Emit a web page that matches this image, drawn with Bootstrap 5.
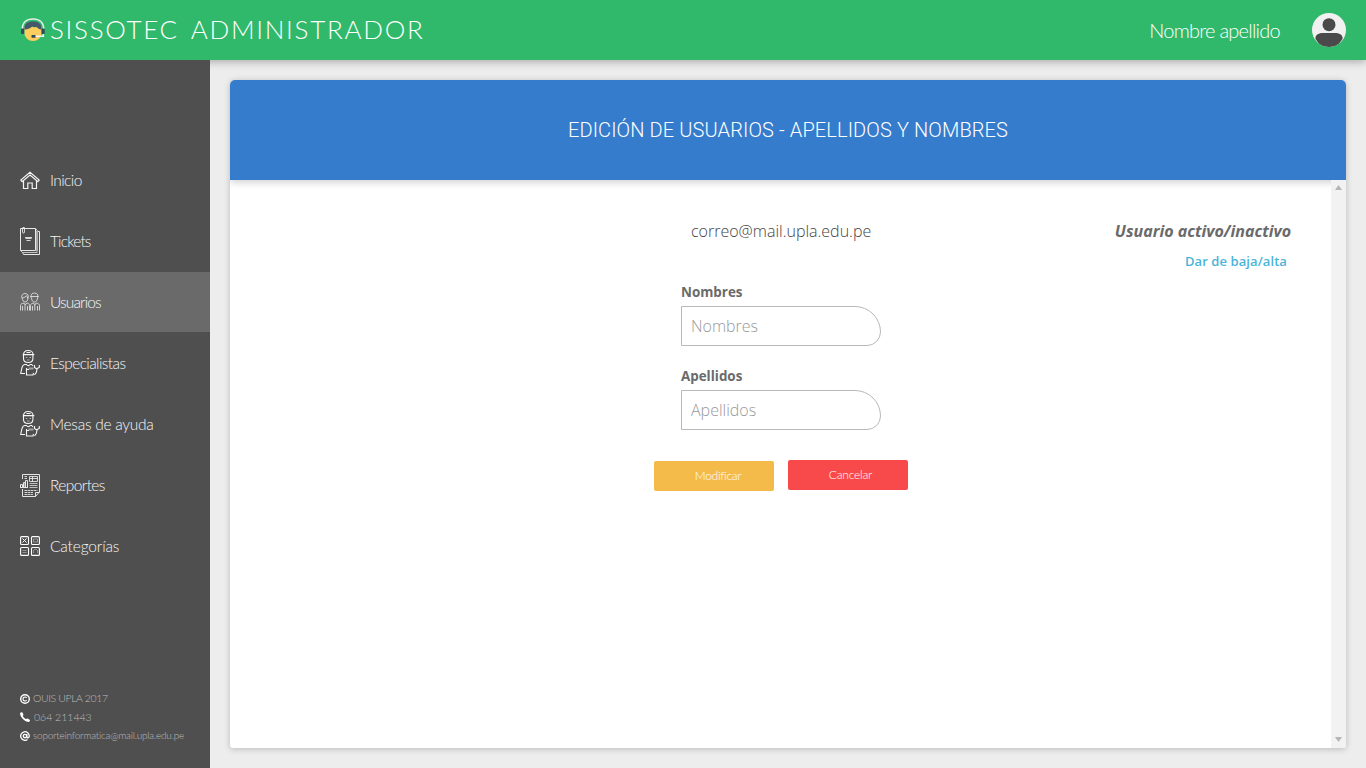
<!DOCTYPE html>
<html lang="es">
<head>
<meta charset="utf-8">
<meta name="viewport" content="width=device-width, initial-scale=1">
<title>SISSOTEC Administrador</title>
<link href="https://cdn.jsdelivr.net/npm/bootstrap@5.3.0/dist/css/bootstrap.min.css" rel="stylesheet">
<style>
body{background:#ededed;font-family:"Lato","Liberation Sans",sans-serif;font-weight:300;overflow:hidden}
svg{flex:none}
.topbar{height:60px;background:#31b96b;box-shadow:0 2px 8px rgba(0,0,0,.28);z-index:2;padding:0 20px}
.brand-title{font-size:26px;line-height:58px;height:60px;letter-spacing:1.7px;word-spacing:4px;margin-left:4px}
.user-name{font-size:20px;line-height:60px;letter-spacing:-.75px;margin-right:32px}
.sidebar{width:210px;background:#4f4f4f;z-index:3;padding-top:90px;padding-bottom:23px}
.side-link{height:60px;margin-bottom:1px;padding:0 20px;gap:10px;color:#f6f6f6;font-size:15.5px;text-decoration:none}
.side-link span{padding-top:2px}
.side-link:hover{color:#fff}
.side-link.active{background:#6a6a6a}
.ls-1{letter-spacing:-.15px}.ls-2{letter-spacing:-.27px}.ls-5{letter-spacing:-.6px}.ls-8{letter-spacing:-.85px}
.foot-line{height:18.5px;padding:0 20px;gap:3px;font-size:10.5px;letter-spacing:-.38px;color:#bdbdbd;white-space:nowrap}
.foot-line span{padding-top:1px}
.foot-tel{letter-spacing:0;gap:4px}
.foot-mail{font-size:10px;letter-spacing:-.22px}
.foot-mail span{padding-top:0}
.content-area{padding:20px}
.panel{background:#fff;border-radius:5px 5px 3px 3px;box-shadow:0 1px 6px rgba(0,0,0,.22);overflow:hidden}
.panel-head{height:100px;background:#357ccd;box-shadow:0 2px 8px rgba(0,0,0,.2);z-index:1}
.panel-head h1{font:300 20px/24px Roboto,sans-serif;letter-spacing:.11px}
.panel-body{display:grid;grid-template-columns:1fr 281px 1fr;font-family:"Open Sans",sans-serif;padding-top:39px}
.fake-scroll{width:15px;background:#f2f2f2;padding:5px 0 6px;z-index:2}
.edit-form{padding:0 40px 0 41px}
.mail{font-size:16px;line-height:24px;color:#444;padding-left:10px;margin-bottom:39px}
.lbl{font-size:13.4px;line-height:20px;font-weight:700;color:#6a6a6a;display:block;margin-bottom:4px}
.inp{width:200px;height:40px;border:1px solid #b9b9b9;border-radius:0 26px 14px 0;padding:0 9px;font:300 16px "Open Sans",sans-serif;color:#555;outline:0;background:#fff;display:block;margin-bottom:20px}
.inp::placeholder{color:#999;opacity:1}
.actions{gap:14px;padding:10px 0 0 14px}
.action{width:120px;height:30px;border:0;border-radius:2px;color:#fff;font-family:Lato,sans-serif;font-weight:300;font-size:12px;line-height:30px}
.edit{background:#f5bb4a;margin-top:1px;padding:0 0 0 8px;letter-spacing:-.3px}
.cancel{background:#f84a4a;padding:0 0 0 5px;letter-spacing:-.22px}
.state{padding-right:40px;text-align:right}
.state-now{font-style:italic;font-weight:700;font-size:16px;line-height:24px;color:#6a6a6a}
.state-link{font-weight:600;font-size:13px;line-height:20px;letter-spacing:.08px;color:#4ab4d8;text-decoration:none;margin:8px 4px 0 0;display:block}
</style>
</head>
<body>
<svg width="0" height="0" class="position-absolute" aria-hidden="true">
<symbol id="worker" viewBox="0 0 20 28"><g fill="none" stroke="#f6f6f6" stroke-width="1.100">
<path d="M3.300 6.500C3.300 3.300 5 1.500 8.200 1.500s4.800 1.800 4.800 4M2.800 5.600h11.500M6.500 3.500h4"/><path d="M3.500 6v3.500c0 2.500 2 4 4.700 4s4.700-1.500 4.700-4V6"/><path d="M5.800 8.500h1.500M9.500 8.500H11M7 11h2.500" opacity=".6"/>
<path d="M4.500 15.500C3 15.700 2.400 17 2 18.500L.7 24.500H5M4.500 15.500h2c1 1.500 2.700 1.500 3.700 0h1.500l1.300 1.500"/><path d="M6.500 19v7h6.500l.5-2M6.500 20.500H9"/><path d="M14.500 16v2.500l2 1.300 2.800-1.300V16M17 20l-.5 3-2 3"/></g><path d="M8.500 18.500h5v2h-5z" fill="#ddd" opacity=".6"/></symbol>
</svg>
<div class="vh-100 d-flex flex-column">
<header class="topbar d-flex align-items-center justify-content-between position-relative text-white">
<div class="d-flex align-items-center">
<svg width="26" height="26" viewBox="0 0 26 26"><path d="M4.500 10h17v6c0 4.500-4 8-8.500 8s-8.500-3.500-8.500-8z" fill="#fdce5e"/><path d="M4.500 12.500C4 7 7.500 4.500 13 4.500S22 7 21.500 12.500c-2.500-.3-4.200-1.500-5-2.800-1.700 1-3 .5-4.200-.4-1.300 1.700-4.300 3.200-7.800 3.200z" fill="#44576b"/><path d="M2.300 12C2.300 5.500 6.500 2 13 2s10.700 3.500 10.700 10" fill="none" stroke="#e4f0ea" stroke-width="1.500"/><rect x="1" y="11.500" width="3.200" height="5.500" rx="1" fill="#34495e"/><rect x="21.500" y="11.500" width="3.200" height="5.500" rx="1" fill="#34495e"/><path d="M23.300 17v2.300H15" fill="none" stroke="#f3f3f3" stroke-width="1.600"/><rect x="11.500" y="18" width="4" height="2.700" rx=".5" fill="#34495e"/></svg>
<span class="brand-title">SISSOTEC ADMINISTRADOR</span></div>
<div class="d-flex align-items-center"><span class="user-name">Nombre apellido</span>
<svg width="34" height="34" viewBox="0 0 34 34"><defs><clipPath id="av"><circle cx="17" cy="17" r="17"/></clipPath></defs><circle cx="17" cy="17" r="17" fill="#f1f1f1"/><g fill="#4a4a4a" clip-path="url(#av)"><circle cx="17" cy="11.700" r="6.500"/><path d="M3.500 24.500c.5-3 3-4.500 8-4.500h11c5 0 7.500 1.500 8 4.500V26L25 33.500l-8 .5-8-.5L3.500 26z"/></g></svg></div>
</header>
<div class="d-flex flex-grow-1">
<aside class="sidebar d-flex flex-column">
<a class="side-link d-flex align-items-center"><svg width="20" height="20" viewBox="0 0 20 20" fill="none" stroke="#f4f4f4" stroke-width="1.200"><path d="M10 2.300.8 10.100l1.300 1.600L10 5.100l7.900 6.600 1.300-1.600z"/><path d="M3.500 10.500v8h4.300V13h4.400v5.500h4.300v-8"/></svg><span class="ls-5">Inicio</span></a>
<a class="side-link d-flex align-items-center"><svg width="20" height="30" viewBox="0 0 20 30" fill="none" stroke="#e8e8e8"><path d="M.5 2.500h15v22H.5z"/><path d="M17 4.500v21" stroke="#aaa" stroke-width="2"/><path d="M.5 24.500l2 2h15M15.500 2.500l2 2" opacity=".75"/><path d="M18 5.500h1.500v23h-16l-1-2"/><path d="M2.500 1.500h2V6c0 1.500-2 1.500-2 0V3M5 11.500h7M5.500 12.500h6M6.500 14.500h4" stroke-width=".9"/></svg><span class="ls-8">Tickets</span></a>
<a class="side-link active d-flex align-items-center"><svg width="20" height="20" viewBox="0 0 20 20" fill="none" stroke="#eee" stroke-width=".8"><path d="M2 6.500c-1-3 .5-5 3-5s4 2 3 5M2.500 5.500c2 0 3-.5 4-1.800L7.800 6M2.500 6c0 2.500 1 4 2.600 4s2.700-1.500 2.700-4M10.800 5.500c0-3 1.200-4.500 3.700-4.500s3.600 1.500 3.600 4.500M10.500 4.500h8M11.500 5.500c0 3 1.300 4.500 3 4.500s3-1.500 3-4.500"/><path d="M.5 18.500v-5C.5 12 2 11.500 4 11l1.200 2 1.600-2c1.700.4 2.700 1 2.700 2.500v5M10.500 18.500v-5c0-1.500 1.500-2 3-2.500l1.300 2 1.400-2c2 .5 3.300 1 3.300 2.500v5M2.500 14v4.500M7.500 14v4.500M5 13v5.500M12.500 14v4.500M17.500 14v4.500M14.800 13v5.500"/></svg><span class="ls-8">Usuarios</span></a>
<a class="side-link d-flex align-items-center"><svg width="20" height="28"><use href="#worker"/></svg><span class="ls-5">Especialistas</span></a>
<a class="side-link d-flex align-items-center"><svg width="20" height="28"><use href="#worker"/></svg><span class="ls-2">Mesas de ayuda</span></a>
<a class="side-link d-flex align-items-center"><svg width="20" height="24" viewBox="0 0 20 24" fill="none" stroke="#e4e4e4"><path d="M2.500 6V1.500h17V19L15.500 23.500h-13V16M15.500 23.500v-4h4"/><path d="M9.500 3.500h8v5h-8zM12.500 3v6M9.500 5.500h8M4.500 3.500H7M4.500 5.500H7" stroke-width=".9"/><path d="M9.500 10.500h8M9.500 12.500h8M9.500 14.500h8" opacity=".75"/><path d="M4.500 17.500h13M4.500 19.500h9M4.500 21.500h9" stroke-width=".9" stroke-dasharray="2.500 .5"/><path d="M.5 14.500v-3h2v3M3.500 14.500v-5h1.500v5M5.500 14.500v-7h2v7M0 14.500h8"/></svg><span class="ls-5">Reportes</span></a>
<a class="side-link d-flex align-items-center"><svg width="20" height="20" viewBox="0 0 20 20" fill="none" stroke="#fff"><g stroke-width="1.100"><rect x=".6" y=".6" width="7.900" height="7.900" rx="1"/><rect x="11.500" y=".6" width="7.900" height="7.900" rx="1"/><rect x=".6" y="11.500" width="7.900" height="7.900" rx="1"/><rect x="11.500" y="11.500" width="7.900" height="7.900" rx="1"/></g><path d="m2.500 2.500 4 4M6.500 2.500l-4 4"/><path d="M13.500 3h4v3h-4zM2.500 14.500h4M2.500 16.500h4M13.500 17v-2.500c1-1.500 3-1.500 4 0V17" opacity=".5" stroke-width=".8"/></svg><span class="ls-1">Categorías</span></a>
<div class="mt-auto">
<div class="foot-line d-flex align-items-center"><svg width="10" height="10" viewBox="0 0 10 10"><circle cx="5" cy="5" r="4.300" fill="none" stroke="#fff" stroke-width="1.400"/><path d="M6.600 3.800a2 2 0 1 0 0 2.400" fill="none" stroke="#fff" stroke-width="1.100"/></svg><span>OUIS UPLA 2017</span></div>
<div class="foot-line foot-tel d-flex align-items-center"><svg width="10" height="10" viewBox="0 0 10 10"><path d="M.3.800C1 0 2 0 2.400.6L3.400 2.300C3.700 3 2.800 3.500 2.900 4c.4 1.300 1.700 2.600 3 3.100.6.200 1-.9 1.700-.5l2 1.100c.6.400.5 1.300-.2 1.900C8.500 10.300 6.500 9.900 4.300 8.300 1.500 6.200-.7 2.600.3.800z" fill="#fff"/></svg><span>064 211443</span></div>
<div class="foot-line foot-mail d-flex align-items-center"><svg width="10" height="10" viewBox="0 0 10 10" fill="none" stroke="#fff" stroke-width="1.300"><circle cx="5" cy="5" r="1.700"/><path d="M6.800 3v2.800c0 1.500 2.500 1.300 2.500-.8A4.300 4.300 0 1 0 7.500 8.500"/></svg><span>soporteinformatica@mail.upla.edu.pe</span></div>
</div>
</aside>
<main class="content-area flex-grow-1">
<section class="panel h-100 d-flex flex-column">
<div class="panel-head position-relative text-white d-flex align-items-center justify-content-center"><h1 class="m-0">EDICIÓN DE USUARIOS - APELLIDOS Y NOMBRES</h1></div>
<div class="d-flex flex-grow-1">
<div class="panel-body flex-grow-1 align-items-start">
<div></div>
<form>
<div class="edit-form">
<div class="mail">correo@mail.upla.edu.pe</div>
<label class="lbl" for="nom">Nombres</label>
<input class="inp" id="nom" placeholder="Nombres">
<label class="lbl" for="ape">Apellidos</label>
<input class="inp" id="ape" placeholder="Apellidos">
</div>
<div class="actions d-flex align-items-start"><button type="button" class="action edit">Modificar</button><button type="button" class="action cancel">Cancelar</button></div>
</form>
<div class="state"><div class="state-now">Usuario activo/inactivo</div><a class="state-link">Dar de baja/alta</a></div>
</div>
<div class="fake-scroll position-relative d-flex flex-column align-items-center justify-content-between"><svg width="7" height="5" viewBox="0 0 7 5"><path d="M3.500 0 7 5H0z" fill="#b5b5b5"/></svg><svg width="7" height="5" viewBox="0 0 7 5"><path d="M0 0h7L3.500 5z" fill="#b5b5b5"/></svg></div>
</div>
</section>
</main>
</div>
</div>
</body>
</html>
